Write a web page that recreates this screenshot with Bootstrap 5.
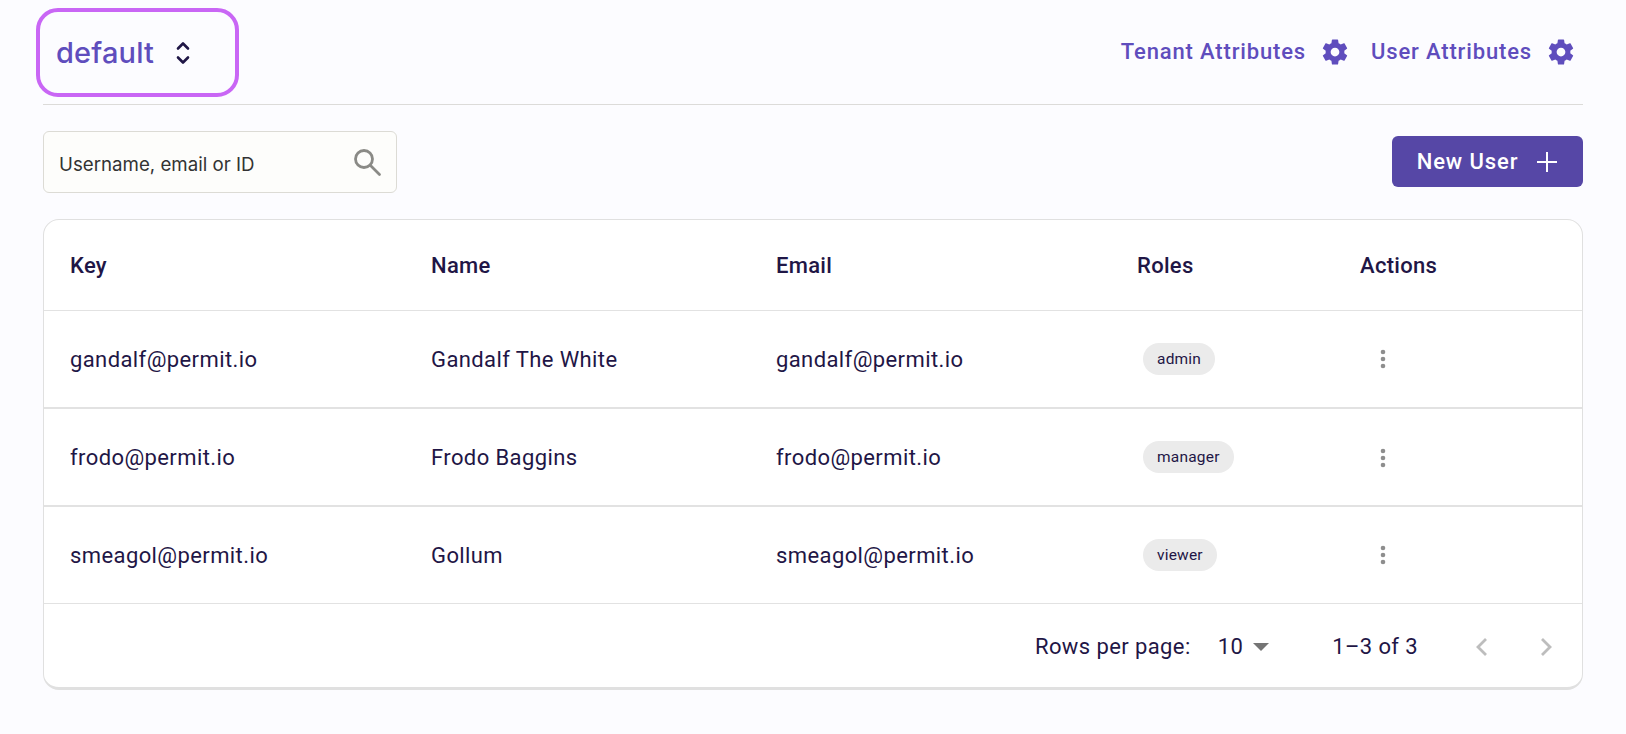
<!DOCTYPE html>
<html lang="en">
<head>
<meta charset="utf-8">
<title>Users</title>
<link href="https://cdn.jsdelivr.net/npm/bootstrap@5.3.0/dist/css/bootstrap.min.css" rel="stylesheet">
<style>
html,body{height:100%}
body{background:#fcfcff;color:#1f1646;font-family:Roboto,sans-serif;font-size:22px;overflow:hidden}
.page-wrap{padding:8px 43px 0 43px}
.top-bar{height:97px;border-bottom:1px solid #dcdbd9;margin-bottom:26px}
.tenant-pick{width:203px;height:89px;margin-left:-7px;border:4px solid #c966f5;border-radius:22px;padding-left:16px;gap:21px;background:transparent}
.tenant-name{font-family:Inter,sans-serif;font-size:29px;font-weight:500;letter-spacing:.15px;color:#5f4dbd}
.attr-link{color:#5f4dbd;font-size:22px;font-weight:500;letter-spacing:.85px;text-decoration:none}
.attr-group{margin-top:-9px;padding-right:7px}
.gear-first{margin-left:14px}
.gear-last{margin-left:14px}
.attr-second{margin-left:21px}
.search-box{width:354px;height:62px;background:#fdfdfb;border:1px solid #dcdbd5;border-radius:6px;padding:0 14px 0 15px}
.search-input{border:0;outline:0;background:transparent;flex:1;min-width:0;padding:7px 0 0;font-family:Inter,sans-serif;font-size:18.700px;color:#333}
.search-input::placeholder{color:#333;opacity:1}
.new-btn{width:191px;height:51px;background:#5647a6;border:0;border-radius:6px;color:#fff;font-size:22px;font-weight:500;letter-spacing:.9px;gap:18px;margin-top:5px}
.new-btn:hover{background:#5647a6;color:#fff}
.tool-row{margin-bottom:26px}
.user-box{background:#fff;border:1px solid #e0e0e0;border-radius:16px;border-bottom:3px solid #e0e0e0;height:471px;overflow:hidden}
.user-table{table-layout:fixed;margin:0;color:#1f1646;--bs-table-bg:transparent}
.user-table th{height:90px;font-weight:500;font-size:22px;letter-spacing:.3px;vertical-align:middle;padding:2px 0 0 26px;border-bottom:1px solid #e2e2e2}
.user-table td{font-size:22px;letter-spacing:.4px;vertical-align:middle;padding:1px 0 0 26px;border-bottom:2px solid #e2e2e2}
.user-table td.chip-cell{padding-top:0;padding-bottom:3px}
.user-table td.dots-cell{padding-top:0;padding-bottom:2px}
.user-table tbody tr{height:98px}
.user-table tbody tr:last-child{height:97px}
.user-table tbody tr:last-child td{border-bottom-width:1px}
.role-chip{display:inline-block;height:32px;line-height:32px;border-radius:16px;background:#ebebeb;padding:0 14px;font-size:15.500px;letter-spacing:.2px;margin-left:6px;color:#1f1646}
.dots-btn{margin-left:20px;border:0;background:transparent;padding:0;line-height:0}
.col-key{width:361px}.col-name{width:345px}.col-email{width:361px}.col-roles{width:223px}
.pager{height:84px;padding-top:2px;font-size:22px;letter-spacing:.4px;padding-right:29px}
.pager-size{margin-left:27px;gap:10px}
.pager-range{margin-left:63px;margin-right:57px}
.pager-icons{gap:52px}
</style>
</head>
<body>
<div class="page-wrap">
  <header class="top-bar d-flex justify-content-between align-items-start">
    <button type="button" class="tenant-pick d-flex align-items-center">
      <span class="tenant-name">default</span>
      <svg width="16" height="26" viewBox="0 0 16 26" fill="none" stroke="#1f1646" stroke-width="2.600" stroke-linecap="round" stroke-linejoin="round"><path d="M3 8.500 8 3.500l5 5"/><path d="M3 17.500l5 5 5-5"/></svg>
    </button>
    <nav class="attr-group d-flex align-items-center align-self-center">
      <a href="#" class="attr-link">Tenant Attributes</a>
      <svg class="gear-first" width="30" height="30" viewBox="0 0 24 24" fill="#5f4dbd"><path d="M19.430 12.980c.04-.32.070-.64.070-.98s-.03-.66-.07-.98l2.110-1.650c.19-.15.240-.42.120-.64l-2-3.460c-.12-.22-.39-.3-.61-.22l-2.490 1c-.52-.4-1.080-.73-1.690-.98l-.38-2.650C14.460 2.180 14.250 2 14 2h-4c-.25 0-.46.18-.49.420l-.38 2.650c-.61.25-1.170.59-1.690.98l-2.490-1c-.23-.09-.49 0-.61.22l-2 3.460c-.13.22-.07.49.12.64l2.110 1.650c-.04.32-.07.65-.07.98s.03.66.07.98l-2.110 1.650c-.19.15-.24.42-.12.64l2 3.460c.12.22.39.3.61.22l2.490-1c.52.4 1.080.73 1.690.98l.38 2.650c.03.24.24.42.49.42h4c.25 0 .46-.18.49-.42l.38-2.650c.61-.25 1.170-.59 1.690-.98l2.490 1c.23.09.49 0 .61-.22l2-3.460c.12-.22.070-.49-.12-.64l-2.110-1.650zM12 15.500c-1.930 0-3.500-1.570-3.500-3.500s1.570-3.500 3.500-3.500 3.500 1.570 3.500 3.500-1.570 3.500-3.500 3.500z"/></svg>
      <a href="#" class="attr-link attr-second">User Attributes</a>
      <svg class="gear-last" width="30" height="30" viewBox="0 0 24 24" fill="#5f4dbd"><path d="M19.430 12.980c.04-.32.070-.64.070-.98s-.03-.66-.07-.98l2.110-1.650c.19-.15.240-.42.120-.64l-2-3.460c-.12-.22-.39-.3-.61-.22l-2.490 1c-.52-.4-1.080-.73-1.690-.98l-.38-2.650C14.460 2.180 14.250 2 14 2h-4c-.25 0-.46.18-.49.420l-.38 2.650c-.61.25-1.170.59-1.690.98l-2.490-1c-.23-.09-.49 0-.61.22l-2 3.460c-.13.22-.07.49.12.64l2.110 1.650c-.04.32-.07.65-.07.98s.03.66.07.98l-2.110 1.650c-.19.15-.24.42-.12.64l2 3.460c.12.22.39.3.61.22l2.490-1c.52.4 1.080.73 1.690.98l.38 2.650c.03.24.24.42.49.42h4c.25 0 .46-.18.49-.42l.38-2.650c.61-.25 1.170-.59 1.690-.98l2.490 1c.23.09.49 0 .61-.22l2-3.460c.12-.22.070-.49-.12-.64l-2.110-1.650zM12 15.500c-1.930 0-3.500-1.570-3.500-3.500s1.570-3.500 3.500-3.500 3.500 1.570 3.500 3.500-1.570 3.500-3.500 3.500z"/></svg>
    </nav>
  </header>

  <div class="tool-row d-flex justify-content-between align-items-start">
    <div class="search-box d-flex align-items-center">
      <input class="search-input" type="text" placeholder="Username, email or ID" aria-label="Search">
      <svg width="30" height="30" viewBox="0 0 30 30" fill="none" stroke="#8a8a86" stroke-width="2.800" stroke-linecap="round"><circle cx="12" cy="12" r="8.500"/><path d="M18.500 18.500 27.500 27.500"/></svg>
    </div>
    <button type="button" class="btn new-btn d-flex align-items-center justify-content-center">
      New User
      <svg width="22" height="22" viewBox="0 0 22 22" stroke="#fff" stroke-width="2" fill="none"><path d="M11 1v20M1 11h20"/></svg>
    </button>
  </div>

  <div class="user-box">
    <table class="table user-table">
      <colgroup><col class="col-key"><col class="col-name"><col class="col-email"><col class="col-roles"><col></colgroup>
      <thead><tr><th>Key</th><th>Name</th><th>Email</th><th>Roles</th><th>Actions</th></tr></thead>
      <tbody>
        <tr><td>gandalf@permit.io</td><td>Gandalf The White</td><td>gandalf@permit.io</td><td class="chip-cell"><span class="role-chip">admin</span></td><td class="dots-cell"><button class="dots-btn" type="button" aria-label="More"><svg width="6" height="20" viewBox="0 0 6 20" fill="#8e8e8e"><circle cx="3" cy="3" r="2.300"/><circle cx="3" cy="10" r="2.300"/><circle cx="3" cy="17" r="2.300"/></svg></button></td></tr>
        <tr><td>frodo@permit.io</td><td>Frodo Baggins</td><td>frodo@permit.io</td><td class="chip-cell"><span class="role-chip">manager</span></td><td class="dots-cell"><button class="dots-btn" type="button" aria-label="More"><svg width="6" height="20" viewBox="0 0 6 20" fill="#8e8e8e"><circle cx="3" cy="3" r="2.300"/><circle cx="3" cy="10" r="2.300"/><circle cx="3" cy="17" r="2.300"/></svg></button></td></tr>
        <tr><td>smeagol@permit.io</td><td>Gollum</td><td>smeagol@permit.io</td><td class="chip-cell"><span class="role-chip">viewer</span></td><td class="dots-cell"><button class="dots-btn" type="button" aria-label="More"><svg width="6" height="20" viewBox="0 0 6 20" fill="#8e8e8e"><circle cx="3" cy="3" r="2.300"/><circle cx="3" cy="10" r="2.300"/><circle cx="3" cy="17" r="2.300"/></svg></button></td></tr>
      </tbody>
    </table>
    <div class="pager d-flex align-items-center justify-content-end">
      <span>Rows per page:</span>
      <span class="pager-size d-flex align-items-center">10 <svg width="16" height="8" viewBox="0 0 16 8" fill="#757575"><path d="M0 0h16L8 8z"/></svg></span>
      <span class="pager-range">1–3 of 3</span>
      <span class="pager-icons d-flex align-items-center">
        <svg width="13" height="20" viewBox="0 0 13 20" fill="none" stroke="#bdbdbd" stroke-width="2.800"><path d="M11 2 3 10l8 8"/></svg>
        <svg width="13" height="20" viewBox="0 0 13 20" fill="none" stroke="#bdbdbd" stroke-width="2.800"><path d="M2 2l8 8-8 8"/></svg>
      </span>
    </div>
  </div>
</div>
<script src="https://cdn.jsdelivr.net/npm/bootstrap@5.3.0/dist/js/bootstrap.bundle.min.js"></script>
</body>
</html>
